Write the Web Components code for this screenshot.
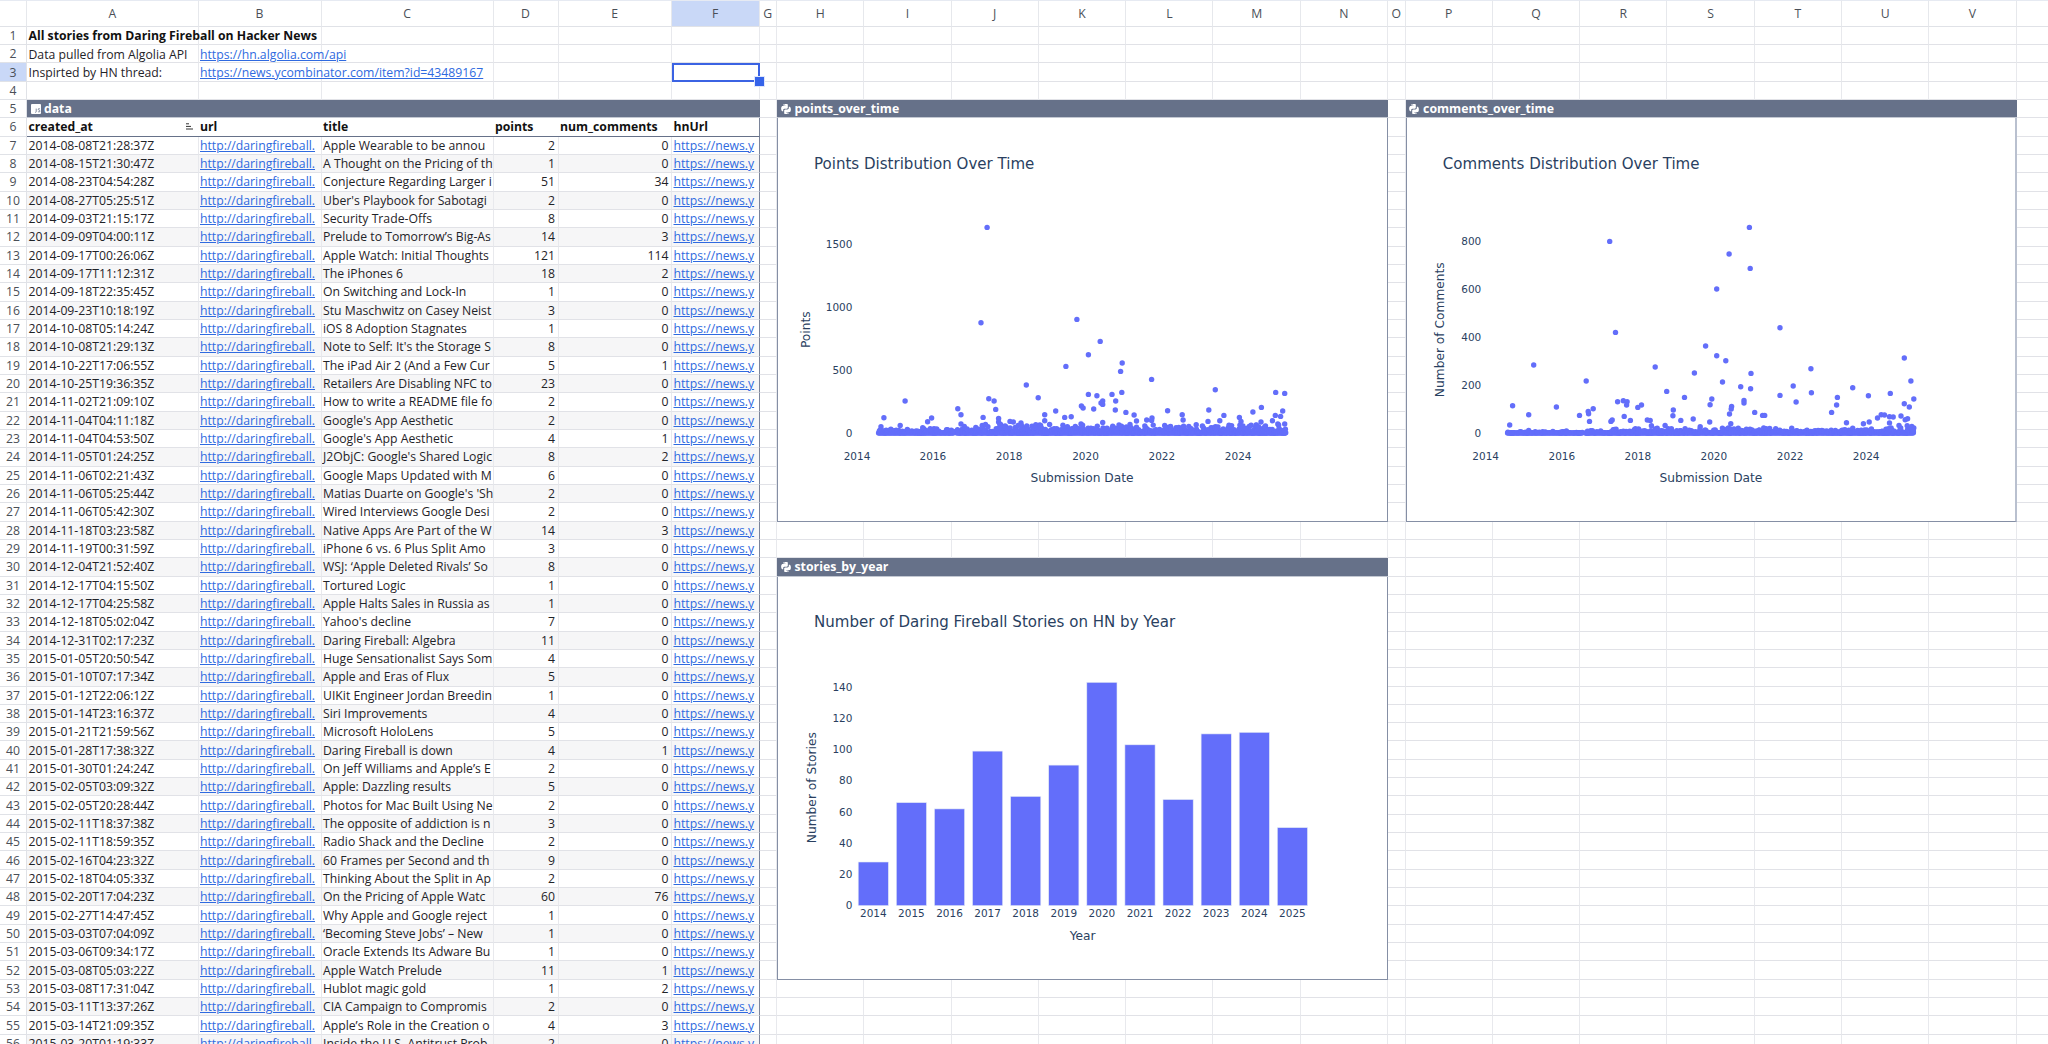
<!DOCTYPE html>
<html>
<head>
<meta charset="utf-8">
<title>All stories from Daring Fireball on Hacker News</title>
<style>
  html, body { margin: 0; height: 100%; overflow: hidden; background: #fff; }
  body { font-family: "Open Sans", sans-serif; font-size: 12.22px; color: #1f2328; }
</style>
</head>
<body>
<sheet-grid>
  <sheet-cell slot="items" col="2" row="1" bold>All stories from Daring Fireball on Hacker News</sheet-cell>
  <sheet-cell slot="items" col="2" row="2">Data pulled from Algolia API</sheet-cell>
  <sheet-cell slot="items" col="3" row="2" link>https://hn.algolia.com/api</sheet-cell>
  <sheet-cell slot="items" col="2" row="3">Inspirted by HN thread:</sheet-cell>
  <sheet-cell slot="items" col="3" row="3" link>https://news.ycombinator.com/item?id=43489167</sheet-cell>

  <stories-table slot="items"></stories-table>
  <sheet-cursor slot="items"></sheet-cursor>

  <chart-window slot="items" name="points_over_time" style="grid-column:9/16;grid-row:6/29">
    <points-chart></points-chart>
  </chart-window>
  <chart-window slot="items" name="comments_over_time" style="grid-column:17/24;grid-row:6/29;--right-edge:2px solid #b9c0cf">
    <comments-chart></comments-chart>
  </chart-window>
  <chart-window slot="items" name="stories_by_year" style="grid-column:9/16;grid-row:31/54">
    <years-chart></years-chart>
  </chart-window>
</sheet-grid>

<script>
// grid sizes, at the 87.3% zoom of the original sheet
const ROW_H = 18.33;
const COLS = [
  ['A', 171.5], ['B', 123], ['C', 172], ['D', 65], ['E', 113.5], ['F', 87.5], ['G', 17.5],
  ['H', 87.3], ['I', 87.3], ['J', 87.3], ['K', 87.3], ['L', 87.3], ['M', 87.3], ['N', 87.3], ['O', 17.5],
  ['P', 87.3], ['Q', 87.3], ['R', 87.3], ['S', 87.3], ['T', 87.3], ['U', 87.3], ['V', 87.3], ['', 40]
];
const ROWS = 56;
const SEL_COL = 'F';
const SEL_ROW = 3;

class SheetGrid extends HTMLElement {
  constructor() {
    super();
    this.attachShadow({ mode: 'open' });
    const colTracks = COLS.map(c => c[1] + 'px').join(' ');
    let cells = '<div class="corner"></div>';
    COLS.forEach(c => {
      cells += `<div class="colh ${c[0] === SEL_COL ? 'sel' : ''}">${c[0]}</div>`;
    });
    for (let r = 1; r <= ROWS; r++) {
      cells += `<div class="rowh ${r === SEL_ROW ? 'sel' : ''}">${r}</div>`;
      COLS.forEach(() => { cells += '<div class="cell"></div>'; });
    }
    this.shadowRoot.innerHTML = `
      <style>
        :host { display: block; height: 100vh; overflow: hidden; }
        .grid {
          display: grid;
          grid-template-columns: 27px ${colTracks};
          grid-template-rows: 26.7px repeat(${ROWS}, ${ROW_H}px);
          font-family: "Open Sans", sans-serif;
          font-size: 12.22px;
        }
        .corner, .colh { border-bottom: 1px solid #e0e2e7; border-right: 1px solid #e6e8ec; border-top: 1px solid #e6eaf2; box-sizing: border-box; }
        .colh { display: flex; align-items: center; justify-content: center; color: #4a4f57; }
        .rowh { display: flex; align-items: center; justify-content: center; color: #4a4f57; border-bottom: 1px solid #e0e2e7; border-right: 1px solid #e0e2e7; box-sizing: border-box; }
        .sel { background: #c9d8f7; }
        .cell { border-right: 1px solid #e8e9ed; border-bottom: 1px solid #e1e2e7; box-sizing: border-box; }
      </style>
      <div class="grid">${cells}<slot name="items"></slot></div>`;
    // slotted items take part in the grid, the cells stay behind them
    const grid = this.shadowRoot.querySelector('.grid');
    let n = 0;
    grid.querySelectorAll('div').forEach(d => {
      const col = (n % (COLS.length + 1)) + 1;
      const row = Math.floor(n / (COLS.length + 1)) + 1;
      d.style.gridColumn = col;
      d.style.gridRow = row;
      n++;
    });
  }
}

class SheetCell extends HTMLElement {
  constructor() {
    super();
    this.attachShadow({ mode: 'open' });
    this.shadowRoot.innerHTML = `
      <style>
        :host { display: flex; align-items: center; padding-left: 1.5px; white-space: nowrap; min-width: 0; z-index: 1; }
        :host([bold]) { font-weight: 700; color: #111; }
        :host([link]) { color: #2f6ae0; text-decoration: underline; text-underline-offset: 1px; }
      </style>
      <slot></slot>`;
  }
  connectedCallback() {
    this.style.gridColumn = this.getAttribute('col');
    this.style.gridRow = Number(this.getAttribute('row')) + 1;
  }
}

// created_at, title, points, num_comments
const STORIES = [
  ['2014-08-08T21:28:37Z', 'Apple Wearable to be annou', 2, 0],
  ['2014-08-15T21:30:47Z', 'A Thought on the Pricing of th', 1, 0],
  ['2014-08-23T04:54:28Z', 'Conjecture Regarding Larger i', 51, 34],
  ['2014-08-27T05:25:51Z', "Uber's Playbook for Sabotagi", 2, 0],
  ['2014-09-03T21:15:17Z', 'Security Trade-Offs', 8, 0],
  ['2014-09-09T04:00:11Z', 'Prelude to Tomorrow’s Big-As', 14, 3],
  ['2014-09-17T00:26:06Z', 'Apple Watch: Initial Thoughts', 121, 114],
  ['2014-09-17T11:12:31Z', 'The iPhones 6', 18, 2],
  ['2014-09-18T22:35:45Z', 'On Switching and Lock-In', 1, 0],
  ['2014-09-23T10:18:19Z', 'Stu Maschwitz on Casey Neist', 3, 0],
  ['2014-10-08T05:14:24Z', 'iOS 8 Adoption Stagnates', 1, 0],
  ['2014-10-08T21:29:13Z', "Note to Self: It's the Storage S", 8, 0],
  ['2014-10-22T17:06:55Z', 'The iPad Air 2 (And a Few Cur', 5, 1],
  ['2014-10-25T19:36:35Z', 'Retailers Are Disabling NFC to', 23, 0],
  ['2014-11-02T21:09:10Z', 'How to write a README file fo', 2, 0],
  ['2014-11-04T04:11:18Z', "Google's App Aesthetic", 2, 0],
  ['2014-11-04T04:53:50Z', "Google's App Aesthetic", 4, 1],
  ['2014-11-05T01:24:25Z', "J2ObjC: Google's Shared Logic", 8, 2],
  ['2014-11-06T02:21:43Z', 'Google Maps Updated with M', 6, 0],
  ['2014-11-06T05:25:44Z', "Matias Duarte on Google's 'Sh", 2, 0],
  ['2014-11-06T05:42:30Z', 'Wired Interviews Google Desi', 2, 0],
  ['2014-11-18T03:23:58Z', 'Native Apps Are Part of the W', 14, 3],
  ['2014-11-19T00:31:59Z', 'iPhone 6 vs. 6 Plus Split Amo', 3, 0],
  ['2014-12-04T21:52:40Z', 'WSJ: ‘Apple Deleted Rivals’ So', 8, 0],
  ['2014-12-17T04:15:50Z', 'Tortured Logic', 1, 0],
  ['2014-12-17T04:25:58Z', 'Apple Halts Sales in Russia as', 1, 0],
  ['2014-12-18T05:02:04Z', "Yahoo's decline", 7, 0],
  ['2014-12-31T02:17:23Z', 'Daring Fireball: Algebra', 11, 0],
  ['2015-01-05T20:50:54Z', 'Huge Sensationalist Says Som', 4, 0],
  ['2015-01-10T07:17:34Z', 'Apple and Eras of Flux', 5, 0],
  ['2015-01-12T22:06:12Z', 'UIKit Engineer Jordan Breedin', 1, 0],
  ['2015-01-14T23:16:37Z', 'Siri Improvements', 4, 0],
  ['2015-01-21T21:59:56Z', 'Microsoft HoloLens', 5, 0],
  ['2015-01-28T17:38:32Z', 'Daring Fireball is down', 4, 1],
  ['2015-01-30T01:24:24Z', 'On Jeff Williams and Apple’s E', 2, 0],
  ['2015-02-05T03:09:32Z', 'Apple: Dazzling results', 5, 0],
  ['2015-02-05T20:28:44Z', 'Photos for Mac Built Using Ne', 2, 0],
  ['2015-02-11T18:37:38Z', 'The opposite of addiction is n', 3, 0],
  ['2015-02-11T18:59:35Z', 'Radio Shack and the Decline', 2, 0],
  ['2015-02-16T04:23:32Z', '60 Frames per Second and th', 9, 0],
  ['2015-02-18T04:05:33Z', 'Thinking About the Split in Ap', 2, 0],
  ['2015-02-20T17:04:23Z', 'On the Pricing of Apple Watc', 60, 76],
  ['2015-02-27T14:47:45Z', 'Why Apple and Google reject', 1, 0],
  ['2015-03-03T07:04:09Z', '‘Becoming Steve Jobs’ – New', 1, 0],
  ['2015-03-06T09:34:17Z', 'Oracle Extends Its Adware Bu', 1, 0],
  ['2015-03-08T05:03:22Z', 'Apple Watch Prelude', 11, 1],
  ['2015-03-08T17:31:04Z', 'Hublot magic gold', 1, 2],
  ['2015-03-11T13:37:26Z', 'CIA Campaign to Compromis', 2, 0],
  ['2015-03-14T21:09:35Z', 'Apple’s Role in the Creation o', 4, 3],
  ['2015-03-20T01:19:33Z', 'Inside the U.S. Antitrust Prob', 2, 0]
];

const JS_ICON = `<svg width="10" height="10" viewBox="0 0 10 10"><rect width="10" height="10" rx="1" fill="#fff"/><path d="M5.2 4.6v3q0 .8-.9.8M9 5.2q-.4-.6-1-.6-.8 0-.8.7 0 .5.9.8.9.3.9 1 0 .8-1 .8-.7 0-1.1-.6" fill="none" stroke="#667189" stroke-width=".8"/></svg>`;

const SORT_ICON = `<svg width="9" height="7" viewBox="0 0 9 7"><path d="M1 .8h3M1 3.4h5M1 6h7" stroke="#333" stroke-width="1"/></svg>`;

class StoriesTable extends HTMLElement {
  constructor() {
    super();
    this.attachShadow({ mode: 'open' });
    const tracks = COLS.slice(0, 6).map(c => c[1] + 'px').join(' ');
    let rows = '';
    STORIES.forEach((s, i) => {
      const odd = i % 2 === 1 ? 'odd' : '';
      rows += `
        <div class="td ${odd}">${s[0]}</div>
        <div class="td ${odd}"><a>http://daringfireball.</a></div>
        <div class="td ${odd}">${s[1]}</div>
        <div class="td num ${odd}">${s[2]}</div>
        <div class="td num ${odd}">${s[3]}</div>
        <div class="td last ${odd}"><a>https://news.y</a></div>`;
    });
    this.shadowRoot.innerHTML = `
      <style>
        :host {
          display: grid;
          grid-column: 2 / 8;
          grid-row: 6 / 58;
          grid-template-columns: ${tracks};
          grid-auto-rows: ${ROW_H}px;
          z-index: 1;
          min-width: 0;
        }
        .band {
          grid-column: 1 / -1;
          background: #667189;
          color: #fff;
          font-weight: 700;
          display: flex;
          align-items: center;
          gap: 3px;
          padding-left: 4px;
          border-bottom: 1px solid #c3c8d2;
          box-sizing: border-box;
        }
        .th {
          font-weight: 700;
          color: #111;
          display: flex;
          align-items: center;
          justify-content: space-between;
          padding: 0 5px 0 1.5px;
          background: #fff;
          border-bottom: 1px solid #667189;
          box-sizing: border-box;
        }
        .td {
          display: flex;
          align-items: center;
          padding-left: 1.5px;
          white-space: nowrap;
          overflow: hidden;
          background: #fff;
          border-right: 1px solid #e8e9ed;
          border-bottom: 1px solid #e1e2e7;
          box-sizing: border-box;
          min-width: 0;
        }
        .th.last, .td.last { border-right: 1px solid #7a849a; }
        .odd { background: #f6f6f7; }
        .num { justify-content: flex-end; padding: 0 2.5px 0 0; }
        a { color: #2f6ae0; text-decoration: underline; text-underline-offset: 1px; }
      </style>
      <div class="band">${JS_ICON}<span>data</span></div>
      <div class="th"><span>created_at</span>${SORT_ICON}</div>
      <div class="th">url</div>
      <div class="th">title</div>
      <div class="th">points</div>
      <div class="th">num_comments</div>
      <div class="th last">hnUrl</div>
      ${rows}`;
  }
}

class SheetCursor extends HTMLElement {
  constructor() {
    super();
    this.attachShadow({ mode: 'open' });
    this.shadowRoot.innerHTML = `
      <style>
        :host { display: block; grid-column: 7; grid-row: 4; position: relative; border: 2px solid #3b63e3; box-sizing: border-box; z-index: 2; }
        .handle { position: absolute; right: -7px; bottom: -7px; width: 9px; height: 9px; background: #3563e9; border: 1px solid #dfe6fb; }
      </style>
      <div class="handle"></div>`;
  }
}

// the two halves of the snake logo, pulled apart so the gap between them shows
const PY_ICON = `<svg width="10" height="10" viewBox="0 0 16 16" fill="#fff">
  <path transform="translate(-.6 -.6)" d="M7.9 0C4.4 0 4.6 1.5 4.6 1.5v1.7h3.5v.5H3.2S.8 3.4.8 7.9s2.1 4.3 2.1 4.3h1.2v-2.1s-.1-2.1 2-2.1h3.4s2 0 2-1.9V2.1S11.7 0 7.9 0zM6 1.1a.6.6 0 1 1 0 1.3.6.6 0 0 1 0-1.3z" fill-rule="evenodd"/>
  <path transform="translate(.6 .6)" d="M8.1 16c3.5 0 3.3-1.5 3.3-1.5v-1.7H7.9v-.5h4.9s2.4.3 2.4-4.2-2.1-4.3-2.1-4.3h-1.2v2.1s.1 2.1-2 2.1H6.5s-2 0-2 1.9v3.8S4.3 16 8.1 16zm1.9-1.1a.6.6 0 1 1 0-1.3.6.6 0 0 1 0 1.3z" fill-rule="evenodd"/>
</svg>`;

class ChartWindow extends HTMLElement {
  constructor() {
    super();
    this.attachShadow({ mode: 'open' });
    this.shadowRoot.innerHTML = `
      <style>
        :host { display: flex; flex-direction: column; z-index: 1; min-width: 0; min-height: 0; font-family: "Open Sans", sans-serif; }
        header {
          flex: none;
          height: ${ROW_H}px;
          box-sizing: border-box;
          background: #667189;
          color: #fff;
          font-size: 12.3px;
          font-weight: 700;
          display: flex;
          align-items: center;
          gap: 4px;
          padding-left: 3.5px;
          border-bottom: 1px solid #c3c8d2;
        }
        .body { flex: 1; background: #fff; border: 1px solid #858fa5; border-top: 0; border-right: var(--right-edge, 1px solid #858fa5); min-height: 0; overflow: hidden; }
      </style>
      <header>${PY_ICON}<span class="name"></span></header>
      <div class="body"><slot></slot></div>`;
  }
  connectedCallback() {
    this.shadowRoot.querySelector('.name').textContent = this.getAttribute('name');
  }
}

// shared drawing for the three plots, all numbers are in page pixels
const PLOT_STYLE = `
  <style>
    :host { display: block; height: 100%; }
    svg { display: block; }
    text { font-family: "DejaVu Sans", Verdana, sans-serif; fill: #2a3f5f; dominant-baseline: central; }
    .tick { font-size: 10.48px; }
    .axis { font-size: 12.22px; text-anchor: middle; }
    .title { font-size: 15.05px; }
  </style>`;

function plotSvg(x0, y0, inner) {
  const w = 609, h = 402;
  return `${PLOT_STYLE}<svg width="${w}" height="${h}" viewBox="${x0} ${y0} ${w} ${h}">${inner}</svg>`;
}

function labels(o) {
  let s = `<text class="title" x="${o.titleX}" y="${o.titleY}">${o.title}</text>`;
  o.xTicks.forEach(t => { s += `<text class="tick" x="${t[0]}" y="${o.xTickY}" text-anchor="middle">${t[1]}</text>`; });
  o.yTicks.forEach(t => { s += `<text class="tick" x="${o.yTickX}" y="${t[0]}" text-anchor="end">${t[1]}</text>`; });
  s += `<text class="axis" x="${o.xTitleX}" y="${o.xTitleY}">${o.xTitle}</text>`;
  s += `<text class="axis" transform="translate(${o.yTitleX} ${o.yTitleY}) rotate(-90)">${o.yTitle}</text>`;
  return s;
}

function rng(seed) {
  let v = seed;
  return () => { v = (v * 1664525 + 1013904223) % 4294967296; return v / 4294967296; };
}

function dots(points, scale, ox, oy) {
  return points.map(p => `<circle cx="${(ox + p[0] / scale).toFixed(1)}" cy="${(oy + p[1] / 3).toFixed(1)}" r="2.7"/>`).join('');
}

// points read off the reference, in its zoomed coordinates
const POINTS_OUT = [[532,413],[517,699],[752,689],[809,755],[780,795],[725,830],[863,820],[859,845],[935,869],[628,886],[1091,900],[1239,908],[1261,911],[862,908],[780,914],[801,918],[838,914],[657,924],[536,927],[549,934],[331,934],[815,934],[847,934],[811,940],[815,944],[763,949],[767,955],[793,958],[846,961],[460,957],[553,959],[700,964],[974,963],[1075,961],[1204,953],[1256,964],[1183,967],[872,968],[468,975],[673,975],[892,976],[1010,975],[1112,977],[1238,977],[1251,980],[279,984],[396,985],[522,983],[722,983],[738,981],[560,986],[936,985],[1150,983],[898,994],[673,993],[386,996],[588,995],[596,997],[615,1000],[560,997],[1102,993],[1073,995],[923,991],[935,992],[1012,991],[1231,993],[1203,997],[1154,995],[762,1003],[815,998],[1244,1003],[1261,1003],[565,1004],[468,1003],[319,1007],[272,1011],[520,1007],[608,1007],[1174,1010],[855,1006],[967,1007],[981,1011],[1191,1006],[1214,1009],[476,1010],[374,1014],[653,1013],[1014,1014],[995,1014]];

const COMMENTS_OUT = [[845,413],[507,455],[796,493],[847,536],[766,598],[521,728],[919,714],[739,769],[766,798],[788,813],[323,826],[617,832],[994,837],[1220,805],[712,850],[849,851],[450,874],[780,877],[1236,874],[824,891],[951,889],[848,897],[1095,894],[645,905],[995,909],[1186,911],[919,917],[1133,918],[688,923],[754,928],[1058,923],[1243,928],[526,936],[540,933],[549,936],[548,946],[832,932],[832,940],[958,937],[750,945],[1056,946],[584,946],[575,953],[272,948],[378,952],[802,950],[801,958],[1220,942],[1232,952],[661,961],[467,957],[455,965],[456,972],[858,968],[877,977],[882,977],[1044,968],[797,973],[311,975],[434,977],[660,978],[542,980],[709,988],[1164,975],[1172,976],[1155,985],[1184,981],[1193,982],[1212,979],[1228,987],[1222,990],[598,991],[605,992],[557,992],[679,992],[510,995],[513,991],[458,995],[749,997],[1080,999],[1135,997],[1121,1002],[1184,1000],[800,1002],[608,1008],[641,1007],[265,1006],[726,1011],[1207,1007],[1227,1008],[1238,1010],[1243,1015]];

// the thick band of small stories along zero
function baseline(from, to, gapA, gapB, seed, maxRise, chance, power) {
  const r = rng(seed);
  const pts = [];
  for (let x = from; x <= to; x += 3) {
    if (x > gapA && x < gapB) continue;
    pts.push([x, 1030]);
    const late = x > 500 ? 1 : 0.55;
    if (r() < chance * late) pts.push([x + r() * 2, 1030 - Math.pow(r(), power) * maxRise * late]);
    if (r() < chance * late) pts.push([x + r() * 2, 1030 - Math.pow(r(), power) * maxRise * late * 0.6]);
  }
  return pts;
}

class PointsChart extends HTMLElement {
  constructor() {
    super();
    this.attachShadow({ mode: 'open' });
    const pts = POINTS_OUT.concat(baseline(266, 1262, 450, 456, 7, 26, 0.9, 1.8));
    this.shadowRoot.innerHTML = plotSvg(778, 118.3, labels({
      title: 'Points Distribution Over Time', titleX: 814, titleY: 164,
      xTitle: 'Submission Date', xTitleX: 1082, xTitleY: 478.7,
      yTitle: 'Points', yTitleX: 805.5, yTitleY: 330,
      xTickY: 456, yTickX: 852.4,
      xTicks: [[857, '2014'], [932.9, '2016'], [1009.2, '2018'], [1085.5, '2020'], [1161.8, '2022'], [1238.2, '2024']],
      yTicks: [[433.3, '0'], [370, '500'], [307.3, '1000'], [244.7, '1500']]
    }) + `<g fill="#636efa">${dots(pts, 2.45, 770, 90)}</g>`);
  }
}

class CommentsChart extends HTMLElement {
  constructor() {
    super();
    this.attachShadow({ mode: 'open' });
    const pts = COMMENTS_OUT.concat(baseline(260, 1243, 442, 447, 23, 16, 0.7, 2.4));
    this.shadowRoot.innerHTML = plotSvg(1406.8, 118.3, labels({
      title: 'Comments Distribution Over Time', titleX: 1442.6, titleY: 164,
      xTitle: 'Submission Date', xTitleX: 1710.7, xTitleY: 478.7,
      yTitle: 'Number of Comments', yTitleX: 1439.7, yTitleY: 330,
      xTickY: 456, yTickX: 1481,
      xTicks: [[1485.5, '2014'], [1561.6, '2016'], [1637.6, '2018'], [1713.6, '2020'], [1790, '2022'], [1866, '2024']],
      yTicks: [[433, '0'], [385.3, '200'], [337, '400'], [289.7, '600'], [241.7, '800']]
    }) + `<g fill="#636efa">${dots(pts, 2.42, 1400, 90)}</g>`);
  }
}

class YearsChart extends HTMLElement {
  constructor() {
    super();
    this.attachShadow({ mode: 'open' });
    const values = [28, 66, 62, 99, 70, 90, 143, 103, 68, 110, 111, 50];
    const base = 906.3, perUnit = 1.562;
    let bars = '';
    const xTicks = [];
    values.forEach((v, i) => {
      const x = 858.2 + i * 38.1;
      const h = v * perUnit;
      bars += `<rect x="${x.toFixed(1)}" y="${(base - h).toFixed(1)}" width="30.2" height="${h.toFixed(1)}" fill="#636efa" stroke="#e5ecf6" stroke-width=".6"/>`;
      xTicks.push([(x + 15.1).toFixed(1), 2014 + i]);
    });
    const yTicks = [0, 20, 40, 60, 80, 100, 120, 140].map(v => [(906 - v * perUnit).toFixed(1), v]);
    this.shadowRoot.innerHTML = plotSvg(778, 577.6, bars + labels({
      title: 'Number of Daring Fireball Stories on HN by Year', titleX: 814, titleY: 622.3,
      xTitle: 'Year', xTitleX: 1082.6, xTitleY: 936.7,
      yTitle: 'Number of Stories', yTitleX: 812, yTitleY: 788.3,
      xTickY: 914, yTickX: 852.4,
      xTicks, yTicks
    }));
  }
}

customElements.define('sheet-grid', SheetGrid);
customElements.define('sheet-cell', SheetCell);
customElements.define('stories-table', StoriesTable);
customElements.define('sheet-cursor', SheetCursor);
customElements.define('chart-window', ChartWindow);
customElements.define('points-chart', PointsChart);
customElements.define('comments-chart', CommentsChart);
customElements.define('years-chart', YearsChart);
</script>
</body>
</html>
